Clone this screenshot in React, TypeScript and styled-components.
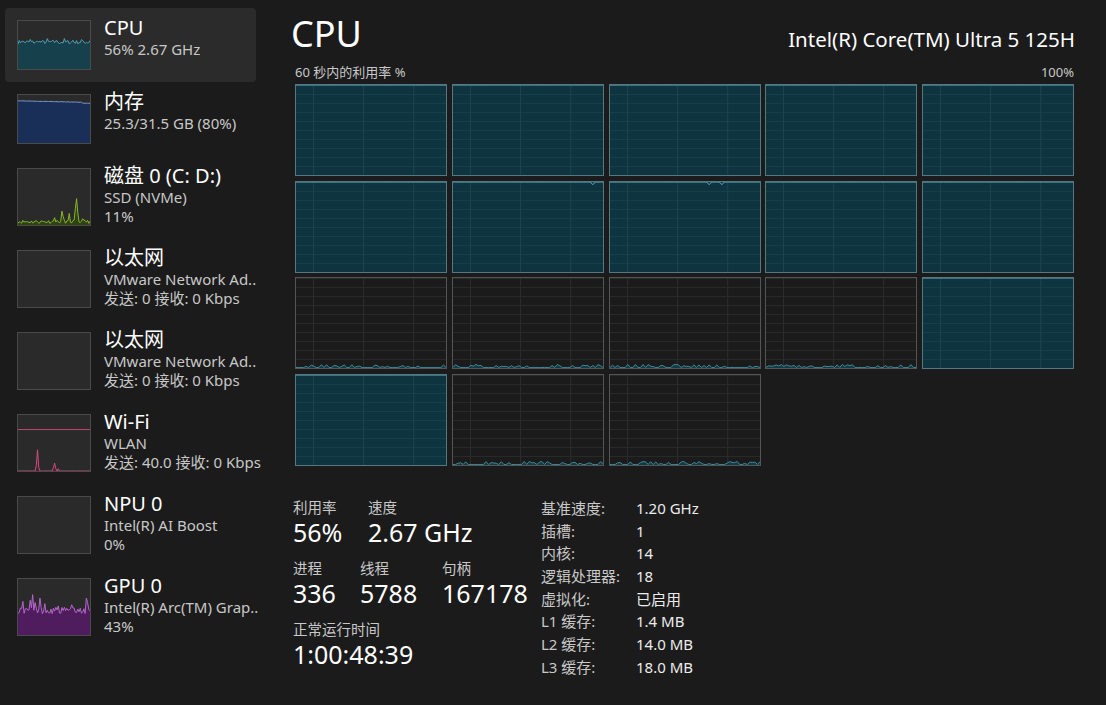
import React from 'react';
import styled, { createGlobalStyle } from 'styled-components';

const GlobalStyle = createGlobalStyle`
  html, body { margin: 0; padding: 0; background: #1b1b1b; }
  body {
    font-family: "Noto Sans", "Noto Sans CJK SC", sans-serif;
    color: #ffffff;
    -webkit-font-smoothing: antialiased;
  }
  * { box-sizing: border-box; }
`;

/* ---------- data helpers ---------- */
function rng(seed: number) {
  let s = seed;
  return () => {
    s = (s * 16807) % 2147483647;
    return (s - 1) / 2147483646;
  };
}

function series(n: number, seed: number, f: (i: number, r: () => number) => number) {
  const r = rng(seed);
  return Array.from({ length: n }, (_, i) => Math.max(0, Math.min(100, f(i, r))));
}

const cpuThumb = series(60, 7, (i, r) => 56 + (r() - 0.5) * 8 + (i % 7 === 3 ? 4 : 0));
const memThumb = series(60, 3, (i, r) => 88 - i * 0.06 - (i > 52 ? 1.8 : 0) + (r() - 0.5) * 0.6);
const diskThumb = series(60, 11, (i, r) => {
  const spikes: Record<number, number> = { 30: 10, 36: 16, 37: 10, 42: 12, 47: 22, 48: 38, 49: 14, 53: 8 };
  return (spikes[i] ?? 0) + 3 + r() * 6;
});
const wifiSpikes = series(60, 5, (i) => {
  const spikes: Record<number, number> = { 15: 10, 16: 38, 17: 6, 29: 6, 30: 14, 31: 4, 33: 4 };
  return spikes[i] ?? 0;
});
const gpuThumb = series(60, 17, (i, r) => {
  const spikes: Record<number, number> = { 4: 60, 10: 62, 12: 72, 14: 58, 18: 66, 22: 56, 33: 52, 44: 54, 56: 66, 57: 58 };
  return spikes[i] ?? 44 + (r() - 0.5) * 12;
});

const flatTop = (dips: Array<[number, number]>) =>
  Array.from({ length: 60 }, (_, i) => {
    for (const [at, depth] of dips) if (i === at) return 100 - depth;
    return 100;
  });

const lowNoise = (seed: number) =>
  series(60, seed, (_, r) => {
    const v = r();
    return v > 0.55 ? 1.5 + r() * 2.5 : 0.6;
  });

/* ---------- primitives ---------- */
const Svg = styled.svg`
  display: block;
  width: 100%;
  height: 100%;
  overflow: visible;
`;

function Spark({
  data,
  stroke,
  fill,
  strokeWidth = 1,
  hLine,
}: {
  data: number[];
  stroke: string;
  fill?: string;
  strokeWidth?: number;
  hLine?: { at: number; color: string };
}) {
  const n = data.length;
  const pts = data
    .map((v, i) => `${((i / (n - 1)) * 100).toFixed(2)},${(100 - v).toFixed(2)}`)
    .join(' ');
  return (
    <Svg viewBox="0 0 100 100" preserveAspectRatio="none">
      {fill && <polygon points={`0,100 ${pts} 100,100`} fill={fill} />}
      {hLine && (
        <line
          x1="0"
          x2="100"
          y1={100 - hLine.at}
          y2={100 - hLine.at}
          stroke={hLine.color}
          strokeWidth={1}
          vectorEffect="non-scaling-stroke"
        />
      )}
      <polyline
        points={pts}
        fill="none"
        stroke={stroke}
        strokeWidth={strokeWidth}
        vectorEffect="non-scaling-stroke"
        strokeLinejoin="round"
      />
    </Svg>
  );
}

/* ---------- layout ---------- */
const Page = styled.div`
  display: flex;
  width: 1106px;
  height: 705px;
  overflow: hidden;
  background: #1b1b1b;
`;

const Sidebar = styled.nav`
  width: 263px;
  flex-shrink: 0;
  padding: 8px 0 0 5px;
  display: flex;
  flex-direction: column;
  overflow: hidden;
`;

const NavItem = styled.div<{ $active?: boolean }>`
  display: flex;
  align-items: flex-start;
  gap: 13px;
  width: 251px;
  padding: 12px 0 12px 12px;
  border-radius: 4px;
  background: ${(p) => (p.$active ? '#2b2b2b' : 'transparent')};
`;

const Thumb = styled.div<{ $h: number }>`
  width: 74px;
  height: ${(p) => p.$h}px;
  flex-shrink: 0;
  border: 1px solid #4a4a4a;
  background: #2a2a2a;
  overflow: hidden;
`;

const NavText = styled.div`
  display: flex;
  flex-direction: column;
  margin-top: -5px;
  white-space: nowrap;
`;

const NavTitle = styled.div`
  font-size: 20px;
  line-height: 25px;
  color: #ffffff;
`;

const NavSub = styled.div`
  font-size: 15px;
  line-height: 19px;
  color: #c8c8c8;
`;

const Main = styled.main`
  flex: 1;
  min-width: 0;
  padding: 12px 32px 0 32px;
  display: flex;
  flex-direction: column;
`;

const HeaderRow = styled.div`
  display: flex;
  justify-content: space-between;
  align-items: baseline;
`;

const PageTitle = styled.h1`
  margin: 0 0 0 -4px;
  font-size: 36px;
  line-height: 43px;
  font-weight: 400;
`;

const Model = styled.div`
  font-size: 20.5px;
  line-height: 26px;
  margin-right: -1px;
`;

const AxisRow = styled.div`
  display: flex;
  justify-content: space-between;
  margin: 9px 0 3px;
  font-size: 13px;
  line-height: 17px;
  color: #c8c8c8;
`;

const CoreGrid = styled.div`
  display: grid;
  grid-template-columns: repeat(5, 1fr);
  grid-template-rows: repeat(4, 92px);
  column-gap: 4.75px;
  row-gap: 4.67px;
`;

const Cell = styled.div<{ $on: boolean }>`
  border: 1px solid ${(p) => (p.$on ? '#557880' : '#555555')};
  background-color: ${(p) => (p.$on ? '#0e3440' : '#1b1b1b')};
  background-image: linear-gradient(
      to right,
      ${(p) => (p.$on ? '#1a4451' : '#2c2c2c')} 1px,
      transparent 1px
    ),
    linear-gradient(to bottom, ${(p) => (p.$on ? '#163f4c' : '#292929')} 1px, transparent 1px);
  background-size: 33.4% 100%, 100% 10%;
  background-position: 17px 0, 0 0;
  overflow: hidden;
`;

const Stats = styled.div`
  display: flex;
  margin: 31px 0 0 -2px;
`;

const LeftStats = styled.div`
  width: 248px;
  display: flex;
  flex-direction: column;
  gap: 10px;
`;

const StatRow = styled.div`
  display: flex;
`;

const Stat = styled.div<{ $w?: number }>`
  width: ${(p) => (p.$w ? `${p.$w}px` : 'auto')};
  display: flex;
  flex-direction: column;
`;

const StatLabel = styled.div`
  font-size: 14.5px;
  line-height: 20px;
  color: #c8c8c8;
`;

const StatValue = styled.div`
  font-size: 25px;
  line-height: 31px;
  color: #ffffff;
`;

const SpecGrid = styled.div`
  display: grid;
  grid-template-columns: 95px auto;
  grid-auto-rows: 22.7px;
  align-content: start;
  font-size: 15px;
  line-height: 22.7px;
`;

const SpecLabel = styled.div`
  color: #c8c8c8;
`;

const SpecValue = styled.div`
  color: #ececec;
`;

/* ---------- content ---------- */
type NavDef = {
  title: string;
  lines: string[];
  active?: boolean;
  graph: React.ReactNode;
};

const navItems: NavDef[] = [
  {
    title: 'CPU',
    lines: ['56% 2.67 GHz'],
    active: true,
    graph: <Spark data={cpuThumb} stroke="#4e9fb3" fill="#16404b" />,
  },
  {
    title: '内存',
    lines: ['25.3/31.5 GB (80%)'],
    graph: <Spark data={memThumb} stroke="#7c9ccc" fill="#1a2f58" />,
  },
  {
    title: '磁盘 0 (C: D:)',
    lines: ['SSD (NVMe)', '11%'],
    graph: <Spark data={diskThumb} stroke="#86b62a" fill="#2f4214" />,
  },
  {
    title: '以太网',
    lines: ['VMware Network Ad..', '发送: 0 接收: 0 Kbps'],
    graph: null,
  },
  {
    title: '以太网',
    lines: ['VMware Network Ad..', '发送: 0 接收: 0 Kbps'],
    graph: null,
  },
  {
    title: 'Wi-Fi',
    lines: ['WLAN', '发送: 40.0 接收: 0 Kbps'],
    graph: (
      <Spark data={wifiSpikes} stroke="#c9507d" fill="#4a1e30" hLine={{ at: 74, color: '#c2456f' }} />
    ),
  },
  {
    title: 'NPU 0',
    lines: ['Intel(R) AI Boost', '0%'],
    graph: null,
  },
  {
    title: 'GPU 0',
    lines: ['Intel(R) Arc(TM) Grap..', '43%'],
    graph: <Spark data={gpuThumb} stroke="#b466cc" fill="#4f1d5e" />,
  },
];

const activeCores = [
  true, true, true, true, true,
  true, true, true, true, true,
  false, false, false, false, true,
  true, false, false,
];

const coreDips: Record<number, Array<[number, number]>> = {
  6: [[55, 3]],
  7: [[39, 3], [44, 3]],
};

const specs: Array<[string, string]> = [
  ['基准速度:', '1.20 GHz'],
  ['插槽:', '1'],
  ['内核:', '14'],
  ['逻辑处理器:', '18'],
  ['虚拟化:', '已启用'],
  ['L1 缓存:', '1.4 MB'],
  ['L2 缓存:', '14.0 MB'],
  ['L3 缓存:', '18.0 MB'],
];

export default function App() {
  return (
    <>
      <GlobalStyle />
      <Page>
        <Sidebar>
          {navItems.map((item, i) => (
            <NavItem key={i} $active={item.active}>
              <Thumb $h={item.lines.length > 1 ? 58 : 50}>{item.graph}</Thumb>
              <NavText>
                <NavTitle>{item.title}</NavTitle>
                {item.lines.map((l, j) => (
                  <NavSub key={j}>{l}</NavSub>
                ))}
              </NavText>
            </NavItem>
          ))}
        </Sidebar>

        <Main>
          <HeaderRow>
            <PageTitle>CPU</PageTitle>
            <Model>Intel(R) Core(TM) Ultra 5 125H</Model>
          </HeaderRow>
          <AxisRow>
            <span>60 秒内的利用率 %</span>
            <span>100%</span>
          </AxisRow>
          <CoreGrid>
            {activeCores.map((on, i) => (
              <Cell key={i} $on={on}>
                {on ? (
                  <Spark data={flatTop(coreDips[i] ?? [])} stroke="#63a9bb" />
                ) : (
                  <Spark data={lowNoise(100 + i)} stroke="#3f8a99" fill="#143a44" />
                )}
              </Cell>
            ))}
          </CoreGrid>

          <Stats>
            <LeftStats>
              <StatRow>
                <Stat $w={75}>
                  <StatLabel>利用率</StatLabel>
                  <StatValue>56%</StatValue>
                </Stat>
                <Stat>
                  <StatLabel>速度</StatLabel>
                  <StatValue>2.67 GHz</StatValue>
                </Stat>
              </StatRow>
              <StatRow>
                <Stat $w={67}>
                  <StatLabel>进程</StatLabel>
                  <StatValue>336</StatValue>
                </Stat>
                <Stat $w={82}>
                  <StatLabel>线程</StatLabel>
                  <StatValue>5788</StatValue>
                </Stat>
                <Stat>
                  <StatLabel>句柄</StatLabel>
                  <StatValue>167178</StatValue>
                </Stat>
              </StatRow>
              <StatRow>
                <Stat>
                  <StatLabel>正常运行时间</StatLabel>
                  <StatValue>1:00:48:39</StatValue>
                </Stat>
              </StatRow>
            </LeftStats>
            <SpecGrid>
              {specs.map(([k, v]) => (
                <React.Fragment key={k}>
                  <SpecLabel>{k}</SpecLabel>
                  <SpecValue>{v}</SpecValue>
                </React.Fragment>
              ))}
            </SpecGrid>
          </Stats>
        </Main>
      </Page>
    </>
  );
}
